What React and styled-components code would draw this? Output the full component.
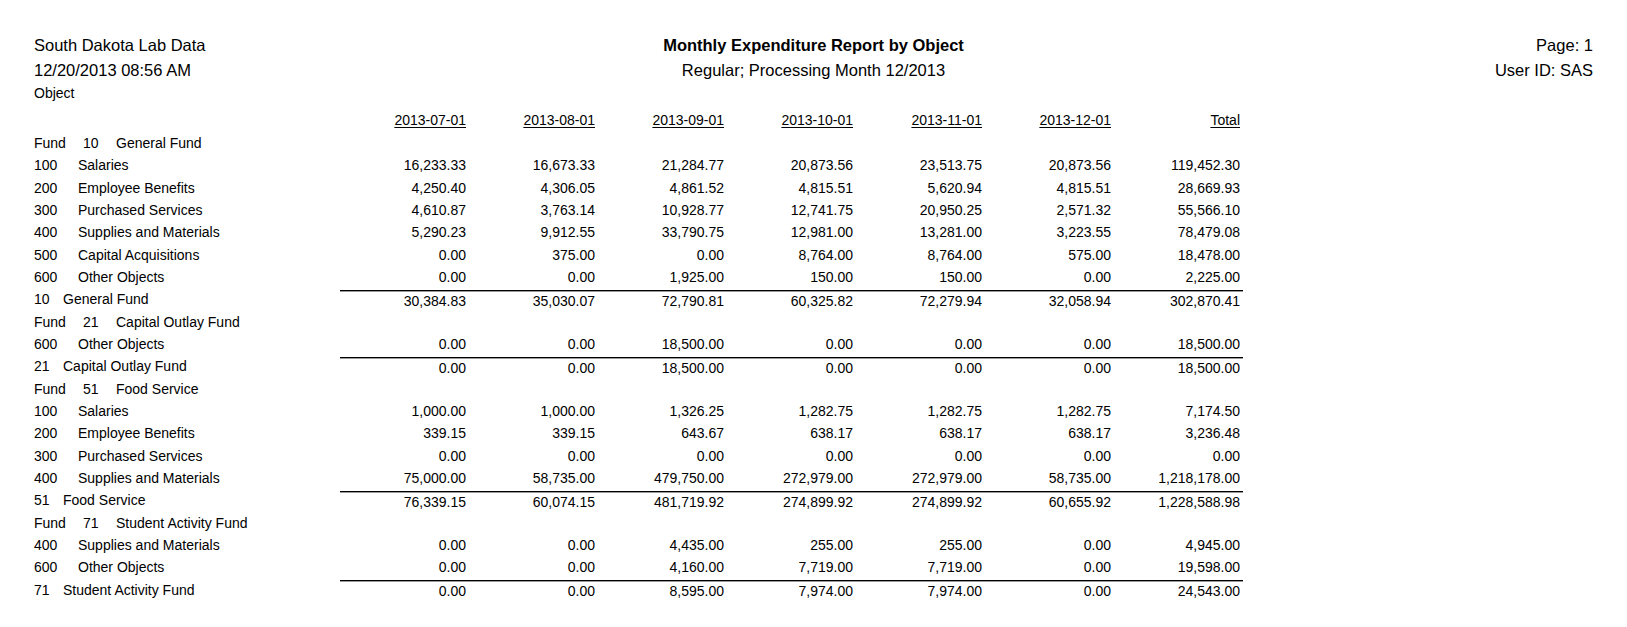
import React from 'react'
import styled, { createGlobalStyle } from 'styled-components'

const GlobalStyle = createGlobalStyle`
  html, body {
    margin: 0;
    background: #fff;
  }
  body {
    color: #000;
    font-family: "Liberation Sans", Arial, sans-serif;
  }
`

const Page = styled.div`
  padding: 32.5px 34px 0;
`
const ReportHeader = styled.header`
  display: grid;
  grid-template-columns: 1fr auto 1fr;
  font-size: 16.5px;
  line-height: 25px;
`
const HeaderCol = styled.div`
  display: flex;
  flex-direction: column;
  align-items: ${p => p.$align || 'flex-start'};
`
const Title = styled.div`
  font-weight: ${p => (p.$bold ? 700 : 400)};
`
const GroupLabel = styled.div`
  font-size: 14px;
  line-height: 21px;
`
const Table = styled.div`
  font-size: 14px;
`
const Row = styled.div`
  display: flex;
  align-items: stretch;
  height: ${p => p.$h || '22.33px'};
`
const HeadRow = styled(Row)`
  margin-top: 5.5px;
  margin-bottom: 0.8px;
`
const LabelCell = styled.div`
  width: 306px;
  flex: none;
  display: flex;
  align-items: center;
  white-space: nowrap;
`
const Values = styled.div`
  display: flex;
  flex: none;
  ${p =>
    p.$total &&
    `
    margin-top: 2px;
    border-top: 1px solid #000;
    box-shadow: inset 0 1px 0 #9a9a9a;
  `}
`
const ValueCell = styled.div`
  width: 129px;
  box-sizing: border-box;
  padding-right: 3px;
  text-align: right;
  display: flex;
  align-items: center;
  justify-content: flex-end;
  white-space: nowrap;
`
const DateHead = styled.span`
  text-decoration: underline;
  text-underline-offset: 2px;
  text-decoration-thickness: 1px;
`
const Tab = styled.span`
  display: inline-block;
  width: ${p => p.$w}px;
`

const COLUMNS = ['2013-07-01', '2013-08-01', '2013-09-01', '2013-10-01', '2013-11-01', '2013-12-01', 'Total']

const FUNDS = [
  {
    no: '10',
    name: 'General Fund',
    rows: [
      ['100', 'Salaries', ['16,233.33', '16,673.33', '21,284.77', '20,873.56', '23,513.75', '20,873.56', '119,452.30']],
      ['200', 'Employee Benefits', ['4,250.40', '4,306.05', '4,861.52', '4,815.51', '5,620.94', '4,815.51', '28,669.93']],
      ['300', 'Purchased Services', ['4,610.87', '3,763.14', '10,928.77', '12,741.75', '20,950.25', '2,571.32', '55,566.10']],
      ['400', 'Supplies and Materials', ['5,290.23', '9,912.55', '33,790.75', '12,981.00', '13,281.00', '3,223.55', '78,479.08']],
      ['500', 'Capital Acquisitions', ['0.00', '375.00', '0.00', '8,764.00', '8,764.00', '575.00', '18,478.00']],
      ['600', 'Other Objects', ['0.00', '0.00', '1,925.00', '150.00', '150.00', '0.00', '2,225.00']],
    ],
    total: ['30,384.83', '35,030.07', '72,790.81', '60,325.82', '72,279.94', '32,058.94', '302,870.41'],
  },
  {
    no: '21',
    name: 'Capital Outlay Fund',
    rows: [
      ['600', 'Other Objects', ['0.00', '0.00', '18,500.00', '0.00', '0.00', '0.00', '18,500.00']],
    ],
    total: ['0.00', '0.00', '18,500.00', '0.00', '0.00', '0.00', '18,500.00'],
  },
  {
    no: '51',
    name: 'Food Service',
    rows: [
      ['100', 'Salaries', ['1,000.00', '1,000.00', '1,326.25', '1,282.75', '1,282.75', '1,282.75', '7,174.50']],
      ['200', 'Employee Benefits', ['339.15', '339.15', '643.67', '638.17', '638.17', '638.17', '3,236.48']],
      ['300', 'Purchased Services', ['0.00', '0.00', '0.00', '0.00', '0.00', '0.00', '0.00']],
      ['400', 'Supplies and Materials', ['75,000.00', '58,735.00', '479,750.00', '272,979.00', '272,979.00', '58,735.00', '1,218,178.00']],
    ],
    total: ['76,339.15', '60,074.15', '481,719.92', '274,899.92', '274,899.92', '60,655.92', '1,228,588.98'],
  },
  {
    no: '71',
    name: 'Student Activity Fund',
    rows: [
      ['400', 'Supplies and Materials', ['0.00', '0.00', '4,435.00', '255.00', '255.00', '0.00', '4,945.00']],
      ['600', 'Other Objects', ['0.00', '0.00', '4,160.00', '7,719.00', '7,719.00', '0.00', '19,598.00']],
    ],
    total: ['0.00', '0.00', '8,595.00', '7,974.00', '7,974.00', '0.00', '24,543.00'],
  },
]

const FundBlock = ({ fund }) => (
  <>
    <Row>
      <LabelCell>
        <Tab $w={49}>Fund</Tab>
        <Tab $w={33}>{fund.no}</Tab>
        {fund.name}
      </LabelCell>
    </Row>
    {fund.rows.map(([code, name, values]) => (
      <Row key={code}>
        <LabelCell>
          <Tab $w={44}>{code}</Tab>
          {name}
        </LabelCell>
        <Values>
          {values.map((v, i) => (
            <ValueCell key={i}>{v}</ValueCell>
          ))}
        </Values>
      </Row>
    ))}
    <Row>
      <LabelCell>
        <Tab $w={29}>{fund.no}</Tab>
        {fund.name}
      </LabelCell>
      <Values $total>
        {fund.total.map((v, i) => (
          <ValueCell key={i}>{v}</ValueCell>
        ))}
      </Values>
    </Row>
  </>
)

const App = () => (
  <Page>
    <GlobalStyle />
    <ReportHeader>
      <HeaderCol>
        <Title>South Dakota Lab Data</Title>
        <Title>12/20/2013 08:56 AM</Title>
      </HeaderCol>
      <HeaderCol $align="center">
        <Title $bold>Monthly Expenditure Report by Object</Title>
        <Title>Regular; Processing Month 12/2013</Title>
      </HeaderCol>
      <HeaderCol $align="flex-end">
        <Title>Page: 1</Title>
        <Title>User ID: SAS</Title>
      </HeaderCol>
    </ReportHeader>
    <GroupLabel>Object</GroupLabel>
    <Table>
      <HeadRow $h="22px">
        <LabelCell />
        <Values>
          {COLUMNS.map(c => (
            <ValueCell key={c}>
              <DateHead>{c}</DateHead>
            </ValueCell>
          ))}
        </Values>
      </HeadRow>
      {FUNDS.map(f => (
        <FundBlock key={f.no} fund={f} />
      ))}
    </Table>
  </Page>
)

export default App
